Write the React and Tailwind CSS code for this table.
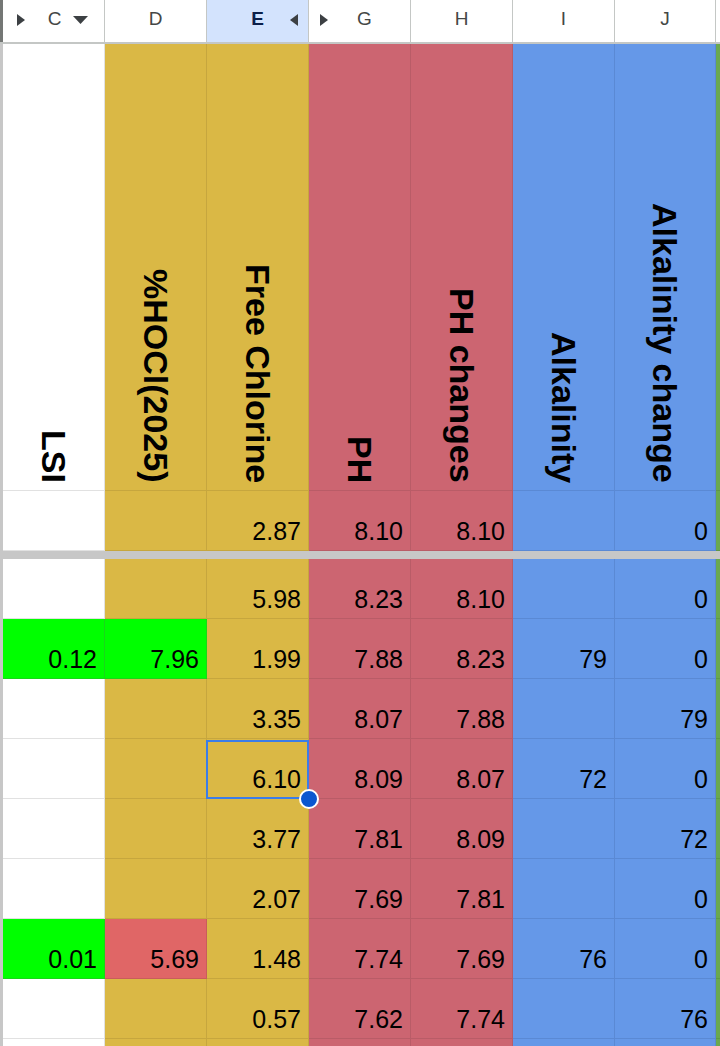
import React from "react";

const COLS = [
  { key: "C", w: "w-[102px]", cls: "bg-white border-[#e1e1e1]", title: "LSI" },
  { key: "D", w: "w-[102px]", cls: "bg-[#dab845] border-[#c6a63e]", title: "%HOCl(2025)" },
  { key: "E", w: "w-[102px]", cls: "bg-[#dab845] border-[#c6a63e]", title: "Free Chlorine" },
  { key: "G", w: "w-[102px]", cls: "bg-[#cc6571] border-[#b95c67]", title: "PH" },
  { key: "H", w: "w-[102px]", cls: "bg-[#cc6571] border-[#b95c67]", title: "PH changes" },
  { key: "I", w: "w-[102px]", cls: "bg-[#6598e8] border-[#5a89d4]", title: "Alkalinity" },
  { key: "J", w: "w-[101px]", cls: "bg-[#6598e8] border-[#5a89d4]", title: "Alkalinity change" },
];

const GREEN = "bg-[#00ff00] border-[#18d818]";
const LIGHTRED = "bg-[#e06666] border-[#c95c5c]";

const ROWS = [
  { v: ["", "", "5.98", "8.23", "8.10", "", "0"] },
  { v: ["0.12", "7.96", "1.99", "7.88", "8.23", "79", "0"], o: { 0: GREEN, 1: GREEN } },
  { v: ["", "", "3.35", "8.07", "7.88", "", "79"] },
  { v: ["", "", "6.10", "8.09", "8.07", "72", "0"], sel: 2 },
  { v: ["", "", "3.77", "7.81", "8.09", "", "72"] },
  { v: ["", "", "2.07", "7.69", "7.81", "", "0"] },
  { v: ["0.01", "5.69", "1.48", "7.74", "7.69", "76", "0"], o: { 0: GREEN, 1: LIGHTRED } },
  { v: ["", "", "0.57", "7.62", "7.74", "", "76"] },
  { v: ["", "", "", "", "", "", ""] },
];

function TriRight() {
  return (
    <svg width="8" height="12" viewBox="0 0 8 12" className="shrink-0">
      <path d="M0 0 L8 6 L0 12 Z" fill="#3c4043" />
    </svg>
  );
}
function TriLeft() {
  return (
    <svg width="8" height="12" viewBox="0 0 8 12" className="shrink-0">
      <path d="M8 0 L0 6 L8 12 Z" fill="#3c4043" />
    </svg>
  );
}
function TriDown() {
  return (
    <svg width="15" height="8" viewBox="0 0 15 8" className="shrink-0">
      <path d="M0 0 L15 0 L7.5 8 Z" fill="#3c4043" />
    </svg>
  );
}

function HeaderRow() {
  return (
    <div className="flex h-[44px]">
      <div className="w-[3px] bg-[#747775] border-b-2 border-[#c4c7c5]" />
      {/* C */}
      <div className="w-[102px] relative flex items-center justify-center pb-[3px] bg-white border-r border-b-2 border-[#c4c7c5] text-[19px] text-[#444746]">
        <div className="absolute left-[14px] top-[14px]"><TriRight /></div>
        <span className="ml-[2px]">C</span>
        <div className="absolute left-[70px] top-[16px]"><TriDown /></div>
      </div>
      {/* D */}
      <div className="w-[102px] flex items-center justify-center pb-[3px] bg-white border-r border-b-2 border-[#c4c7c5] text-[19px] text-[#444746]">
        D
      </div>
      {/* E */}
      <div className="w-[102px] relative flex items-center justify-center pb-[3px] bg-[#d3e3fd] border-r border-b-2 border-[#c4c7c5] text-[19px] font-bold text-[#0b1f4a]">
        E
        <div className="absolute left-[83px] top-[14px]"><TriLeft /></div>
      </div>
      {/* G */}
      <div className="w-[102px] relative flex items-center justify-center pb-[3px] bg-white border-r border-b-2 border-[#c4c7c5] text-[19px] text-[#444746]">
        <div className="absolute left-[11px] top-[14px]"><TriRight /></div>
        <span className="ml-[10px]">G</span>
      </div>
      {["H", "I", "J"].map((k, i) => (
        <div
          key={k}
          className={
            (i === 2 ? "w-[101px] " : "w-[102px] ") +
            "flex items-center justify-center pb-[3px] bg-white border-r border-b-2 border-[#c4c7c5] text-[19px] text-[#444746]"
          }
        >
          {k}
        </div>
      ))}
      <div className="flex-1 bg-white border-b-2 border-[#c4c7c5]" />
    </div>
  );
}

function TitleRow() {
  return (
    <div className="flex h-[447px]">
      <div className="w-[3px] bg-[#c7c7c7]" />
      {COLS.map((c) => (
        <div
          key={c.key}
          className={c.w + " " + c.cls + " border-r border-b flex flex-col items-center justify-end pb-[7px]"}
        >
          <span className="[writing-mode:vertical-rl] text-[34px] font-bold leading-none whitespace-nowrap text-black">
            {c.title}
          </span>
        </div>
      ))}
      <div className="flex-1 bg-[#6aa84f] border-b border-[#5f9747]" />
    </div>
  );
}

function DataRow({ v, o = {}, sel }) {
  return (
    <div className="flex h-[60px]">
      <div className="w-[3px] bg-[#c7c7c7]" />
      {COLS.map((c, i) => (
        <div
          key={c.key}
          className={
            c.w +
            " " +
            (o[i] || c.cls) +
            " relative border-r border-b flex items-end justify-end pr-[7px] pb-[6px] text-[25px] leading-none text-black"
          }
        >
          {v[i]}
          {sel === i && (
            <>
              <div className="absolute left-[-1px] top-[1px] right-[-1px] bottom-[-1px] border-2 border-[#3b7de8] pointer-events-none" />
              <div className="absolute right-[-11px] bottom-[-11px] w-[20px] h-[20px] rounded-full bg-[#0b57d0] border-2 border-white z-10" />
            </>
          )}
        </div>
      ))}
      <div className="flex-1 bg-[#6aa84f] border-b border-[#5f9747]" />
    </div>
  );
}

export default function App() {
  return (
    <div className="w-[720px] h-[1046px] overflow-hidden bg-white font-['Liberation_Sans',Arial,sans-serif]">
      <HeaderRow />
      <TitleRow />
      <DataRow v={["", "", "2.87", "8.10", "8.10", "", "0"]} />
      <div className="h-[8px] bg-[#c7c7c7]" />
      {ROWS.map((r, i) => (
        <DataRow key={i} v={r.v} o={r.o} sel={r.sel} />
      ))}
    </div>
  );
}
